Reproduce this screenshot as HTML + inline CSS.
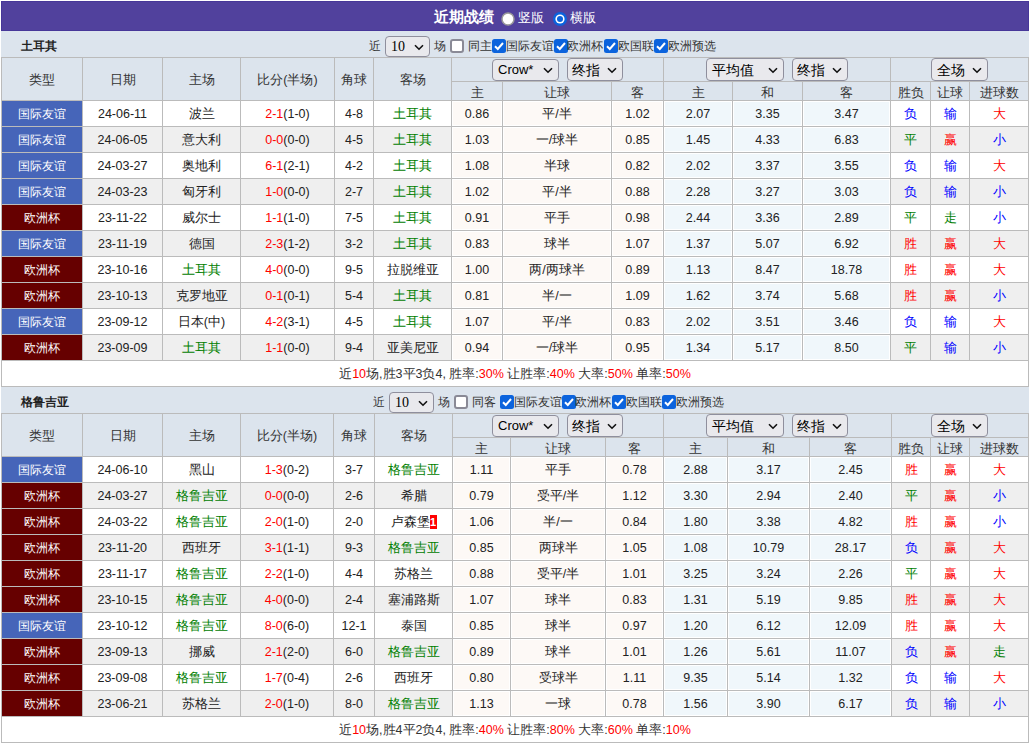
<!DOCTYPE html>
<html><head><meta charset="utf-8"><title>近期战绩</title>
<style>
html,body{margin:0;padding:0;background:#fff;width:1031px;height:744px;overflow:hidden;position:relative;font-family:"Liberation Sans",sans-serif;}
.a{position:absolute;}
.c{position:absolute;text-align:center;white-space:nowrap;overflow:hidden;}
.t{position:absolute;white-space:nowrap;}
.sel{position:absolute;border:1px solid #8f8f9d;border-radius:4px;background:#e9e9ed;}
.badge{display:inline-block;background:#f00;color:#fff;font-size:11px;font-weight:bold;width:7px;height:14px;line-height:14px;text-align:center;vertical-align:0px;}
</style></head><body>
<div class="a" style="left:1px;top:1px;width:1028px;height:30px;background:#51419d;box-sizing:border-box;border:1px solid #473799;"></div>
<div class="t" style="left:434px;top:2px;width:80px;height:30px;line-height:30px;font-size:15px;font-weight:bold;color:#fff;text-align:left;">近期战绩</div>
<svg class="a" style="left:501px;top:12px" width="14" height="14" viewBox="0 0 14 14"><circle cx="7" cy="7" r="6" fill="#fff" stroke="#9a9a9a" stroke-width="1.5"/></svg>
<div class="t" style="left:518px;top:3px;width:40px;height:30px;line-height:30px;font-size:13px;color:#fff;text-align:left;">竖版</div>
<svg class="a" style="left:553px;top:12px" width="14" height="14" viewBox="0 0 14 14"><circle cx="7" cy="7" r="7" fill="#0b63dd"/><circle cx="7" cy="7" r="4.6" fill="#fff"/><circle cx="7" cy="7" r="3" fill="#0b63dd"/></svg>
<div class="t" style="left:570px;top:3px;width:40px;height:30px;line-height:30px;font-size:13px;color:#fff;text-align:left;">横版</div>
<div class="a" style="left:1px;top:31px;width:1028px;height:26px;background:#dce4ed;"></div>
<div class="t" style="left:21px;top:33px;width:80px;height:26px;line-height:26px;font-weight:bold;font-size:11.5px;color:#222;text-align:left;">土耳其</div>
<div class="t" style="left:369px;top:33px;width:14px;height:26px;line-height:26px;font-size:12px;color:#333;text-align:left;">近</div>
<div class="sel" style="left:385px;top:36px;width:43px;height:19px;"></div>
<div class="t" style="left:391px;top:36px;height:21px;line-height:21px;font-size:14px;color:#000;font-family:'Liberation Serif',serif;">10</div>
<svg class="a" style="left:414px;top:44px" width="10" height="7" viewBox="0 0 10 7"><path d="M1 1.2 L5 5.2 L9 1.2" fill="none" stroke="#111" stroke-width="1.6"/></svg>
<div class="t" style="left:434px;top:33px;width:14px;height:26px;line-height:26px;font-size:12px;color:#333;text-align:left;">场</div>
<svg class="a" style="left:450px;top:39px" width="14" height="14" viewBox="0 0 14 14"><rect x="1" y="1" width="12" height="12" rx="2" fill="#fff" stroke="#8a8a96" stroke-width="2"/></svg>
<div class="t" style="left:468px;top:33px;width:30px;height:26px;line-height:26px;font-size:12px;color:#333;text-align:left;">同主</div>
<svg class="a" style="left:492px;top:39px" width="14" height="14" viewBox="0 0 14 14"><rect x="0" y="0" width="14" height="14" rx="2.5" fill="#0b63dd"/><path d="M3 7.2 L5.8 10 L11 4" fill="none" stroke="#fff" stroke-width="2"/></svg>
<div class="t" style="left:506px;top:33px;width:60px;height:26px;line-height:26px;font-size:12px;color:#333;text-align:left;">国际友谊</div>
<svg class="a" style="left:554px;top:39px" width="14" height="14" viewBox="0 0 14 14"><rect x="0" y="0" width="14" height="14" rx="2.5" fill="#0b63dd"/><path d="M3 7.2 L5.8 10 L11 4" fill="none" stroke="#fff" stroke-width="2"/></svg>
<div class="t" style="left:567px;top:33px;width:60px;height:26px;line-height:26px;font-size:12px;color:#333;text-align:left;">欧洲杯</div>
<svg class="a" style="left:604px;top:39px" width="14" height="14" viewBox="0 0 14 14"><rect x="0" y="0" width="14" height="14" rx="2.5" fill="#0b63dd"/><path d="M3 7.2 L5.8 10 L11 4" fill="none" stroke="#fff" stroke-width="2"/></svg>
<div class="t" style="left:618px;top:33px;width:60px;height:26px;line-height:26px;font-size:12px;color:#333;text-align:left;">欧国联</div>
<svg class="a" style="left:654px;top:39px" width="14" height="14" viewBox="0 0 14 14"><rect x="0" y="0" width="14" height="14" rx="2.5" fill="#0b63dd"/><path d="M3 7.2 L5.8 10 L11 4" fill="none" stroke="#fff" stroke-width="2"/></svg>
<div class="t" style="left:668px;top:33px;width:60px;height:26px;line-height:26px;font-size:12px;color:#333;text-align:left;">欧洲预选</div>
<div class="a" style="left:1px;top:57px;width:1028px;height:44px;background:#dce4ed;"></div>
<div class="c" style="left:2px;top:59px;width:80px;height:42px;line-height:42px;font-size:12.5px;color:#333;">类型</div>
<div class="c" style="left:83px;top:59px;width:79px;height:42px;line-height:42px;font-size:12.5px;color:#333;">日期</div>
<div class="c" style="left:163px;top:59px;width:77px;height:42px;line-height:42px;font-size:12.5px;color:#333;">主场</div>
<div class="c" style="left:241px;top:59px;width:93px;height:42px;line-height:42px;font-size:12.5px;color:#333;">比分(半场)</div>
<div class="c" style="left:335px;top:59px;width:38px;height:42px;line-height:42px;font-size:12.5px;color:#333;">角球</div>
<div class="c" style="left:374px;top:59px;width:77px;height:42px;line-height:42px;font-size:12.5px;color:#333;">客场</div>
<div class="c" style="left:452px;top:84px;width:50px;height:18px;line-height:18px;font-size:12.5px;color:#333;">主</div>
<div class="c" style="left:503px;top:84px;width:108px;height:18px;line-height:18px;font-size:12.5px;color:#333;">让球</div>
<div class="c" style="left:612px;top:84px;width:51px;height:18px;line-height:18px;font-size:12.5px;color:#333;">客</div>
<div class="c" style="left:664px;top:84px;width:68px;height:18px;line-height:18px;font-size:12.5px;color:#333;">主</div>
<div class="c" style="left:733px;top:84px;width:69px;height:18px;line-height:18px;font-size:12.5px;color:#333;">和</div>
<div class="c" style="left:803px;top:84px;width:87px;height:18px;line-height:18px;font-size:12.5px;color:#333;">客</div>
<div class="c" style="left:891px;top:84px;width:39px;height:18px;line-height:18px;font-size:12.5px;color:#333;">胜负</div>
<div class="c" style="left:931px;top:84px;width:38px;height:18px;line-height:18px;font-size:12.5px;color:#333;">让球</div>
<div class="c" style="left:970px;top:84px;width:58px;height:18px;line-height:18px;font-size:12.5px;color:#333;">进球数</div>
<div class="sel" style="left:492px;top:59px;width:65px;height:20px;"></div>
<div class="t" style="left:498px;top:59px;height:22px;line-height:22px;font-size:13px;color:#000;">Crow*</div>
<svg class="a" style="left:543px;top:67px" width="10" height="7" viewBox="0 0 10 7"><path d="M1 1.2 L5 5.2 L9 1.2" fill="none" stroke="#111" stroke-width="1.6"/></svg>
<div class="sel" style="left:567px;top:58px;width:54px;height:21px;"></div>
<div class="t" style="left:572px;top:59px;height:23px;line-height:23px;font-size:14px;color:#000;">终指</div>
<svg class="a" style="left:607px;top:67px" width="10" height="7" viewBox="0 0 10 7"><path d="M1 1.2 L5 5.2 L9 1.2" fill="none" stroke="#111" stroke-width="1.6"/></svg>
<div class="sel" style="left:706px;top:58px;width:76px;height:21px;"></div>
<div class="t" style="left:712px;top:59px;height:23px;line-height:23px;font-size:14px;color:#000;">平均值</div>
<svg class="a" style="left:768px;top:67px" width="10" height="7" viewBox="0 0 10 7"><path d="M1 1.2 L5 5.2 L9 1.2" fill="none" stroke="#111" stroke-width="1.6"/></svg>
<div class="sel" style="left:792px;top:58px;width:54px;height:21px;"></div>
<div class="t" style="left:797px;top:59px;height:23px;line-height:23px;font-size:14px;color:#000;">终指</div>
<svg class="a" style="left:832px;top:67px" width="10" height="7" viewBox="0 0 10 7"><path d="M1 1.2 L5 5.2 L9 1.2" fill="none" stroke="#111" stroke-width="1.6"/></svg>
<div class="sel" style="left:931px;top:58px;width:55px;height:21px;"></div>
<div class="t" style="left:937px;top:59px;height:23px;line-height:23px;font-size:14px;color:#000;">全场</div>
<svg class="a" style="left:972px;top:67px" width="10" height="7" viewBox="0 0 10 7"><path d="M1 1.2 L5 5.2 L9 1.2" fill="none" stroke="#111" stroke-width="1.6"/></svg>
<div class="a" style="left:1px;top:101px;width:1028px;height:25px;background:#ffffff;"></div>
<div class="a" style="left:2px;top:101px;width:80px;height:25px;background:#4665b9;"></div>
<div class="a" style="left:452px;top:101px;width:50px;height:25px;background:#fdf9f6;box-shadow:inset 0 0 0 1px #fff;"></div>
<div class="a" style="left:503px;top:101px;width:108px;height:25px;background:#fdf9f6;box-shadow:inset 0 0 0 1px #fff;"></div>
<div class="a" style="left:612px;top:101px;width:51px;height:25px;background:#fdf9f6;box-shadow:inset 0 0 0 1px #fff;"></div>
<div class="a" style="left:664px;top:101px;width:68px;height:25px;background:#f0f7fb;box-shadow:inset 0 0 0 1px #fff;"></div>
<div class="a" style="left:733px;top:101px;width:69px;height:25px;background:#f0f7fb;box-shadow:inset 0 0 0 1px #fff;"></div>
<div class="a" style="left:803px;top:101px;width:87px;height:25px;background:#f0f7fb;box-shadow:inset 0 0 0 1px #fff;"></div>
<div class="c" style="left:2px;top:102px;width:80px;height:25px;line-height:25px;font-size:12px;color:#fff;">国际友谊</div>
<div class="c" style="left:83px;top:102px;width:79px;height:25px;line-height:25px;font-size:12.5px;color:#222222;">24-06-11</div>
<div class="c" style="left:163px;top:102px;width:77px;height:25px;line-height:25px;font-size:12.5px;color:#222222;">波兰</div>
<div class="c" style="left:241px;top:102px;width:93px;height:25px;line-height:25px;font-size:12.5px;color:#222222;"><span style="color:#f00">2-1</span>(1-0)</div>
<div class="c" style="left:335px;top:102px;width:38px;height:25px;line-height:25px;font-size:12.5px;color:#222222;">4-8</div>
<div class="c" style="left:374px;top:102px;width:77px;height:25px;line-height:25px;font-size:12.5px;color:#008000;">土耳其</div>
<div class="c" style="left:452px;top:102px;width:50px;height:25px;line-height:25px;font-size:12.5px;color:#222222;">0.86</div>
<div class="c" style="left:503px;top:102px;width:108px;height:25px;line-height:25px;font-size:12.5px;color:#222222;">平/半</div>
<div class="c" style="left:612px;top:102px;width:51px;height:25px;line-height:25px;font-size:12.5px;color:#222222;">1.02</div>
<div class="c" style="left:664px;top:102px;width:68px;height:25px;line-height:25px;font-size:12.5px;color:#222222;">2.07</div>
<div class="c" style="left:733px;top:102px;width:69px;height:25px;line-height:25px;font-size:12.5px;color:#222222;">3.35</div>
<div class="c" style="left:803px;top:102px;width:87px;height:25px;line-height:25px;font-size:12.5px;color:#222222;">3.47</div>
<div class="c" style="left:891px;top:102px;width:39px;height:25px;line-height:25px;font-size:12.5px;color:#0000ff;">负</div>
<div class="c" style="left:931px;top:102px;width:38px;height:25px;line-height:25px;font-size:12.5px;color:#0000ff;">输</div>
<div class="c" style="left:970px;top:102px;width:58px;height:25px;line-height:25px;font-size:12.5px;color:#ff0000;">大</div>
<div class="a" style="left:1px;top:127px;width:1028px;height:25px;background:#efefef;"></div>
<div class="a" style="left:2px;top:127px;width:80px;height:25px;background:#4665b9;"></div>
<div class="a" style="left:452px;top:127px;width:50px;height:25px;background:#fdf9f6;box-shadow:inset 0 0 0 1px #fff;"></div>
<div class="a" style="left:503px;top:127px;width:108px;height:25px;background:#fdf9f6;box-shadow:inset 0 0 0 1px #fff;"></div>
<div class="a" style="left:612px;top:127px;width:51px;height:25px;background:#fdf9f6;box-shadow:inset 0 0 0 1px #fff;"></div>
<div class="a" style="left:664px;top:127px;width:68px;height:25px;background:#f0f7fb;box-shadow:inset 0 0 0 1px #fff;"></div>
<div class="a" style="left:733px;top:127px;width:69px;height:25px;background:#f0f7fb;box-shadow:inset 0 0 0 1px #fff;"></div>
<div class="a" style="left:803px;top:127px;width:87px;height:25px;background:#f0f7fb;box-shadow:inset 0 0 0 1px #fff;"></div>
<div class="c" style="left:2px;top:128px;width:80px;height:25px;line-height:25px;font-size:12px;color:#fff;">国际友谊</div>
<div class="c" style="left:83px;top:128px;width:79px;height:25px;line-height:25px;font-size:12.5px;color:#222222;">24-06-05</div>
<div class="c" style="left:163px;top:128px;width:77px;height:25px;line-height:25px;font-size:12.5px;color:#222222;">意大利</div>
<div class="c" style="left:241px;top:128px;width:93px;height:25px;line-height:25px;font-size:12.5px;color:#222222;"><span style="color:#f00">0-0</span>(0-0)</div>
<div class="c" style="left:335px;top:128px;width:38px;height:25px;line-height:25px;font-size:12.5px;color:#222222;">4-5</div>
<div class="c" style="left:374px;top:128px;width:77px;height:25px;line-height:25px;font-size:12.5px;color:#008000;">土耳其</div>
<div class="c" style="left:452px;top:128px;width:50px;height:25px;line-height:25px;font-size:12.5px;color:#222222;">1.03</div>
<div class="c" style="left:503px;top:128px;width:108px;height:25px;line-height:25px;font-size:12.5px;color:#222222;">一/球半</div>
<div class="c" style="left:612px;top:128px;width:51px;height:25px;line-height:25px;font-size:12.5px;color:#222222;">0.85</div>
<div class="c" style="left:664px;top:128px;width:68px;height:25px;line-height:25px;font-size:12.5px;color:#222222;">1.45</div>
<div class="c" style="left:733px;top:128px;width:69px;height:25px;line-height:25px;font-size:12.5px;color:#222222;">4.33</div>
<div class="c" style="left:803px;top:128px;width:87px;height:25px;line-height:25px;font-size:12.5px;color:#222222;">6.83</div>
<div class="c" style="left:891px;top:128px;width:39px;height:25px;line-height:25px;font-size:12.5px;color:#008000;">平</div>
<div class="c" style="left:931px;top:128px;width:38px;height:25px;line-height:25px;font-size:12.5px;color:#ff0000;">赢</div>
<div class="c" style="left:970px;top:128px;width:58px;height:25px;line-height:25px;font-size:12.5px;color:#0000ff;">小</div>
<div class="a" style="left:1px;top:153px;width:1028px;height:25px;background:#ffffff;"></div>
<div class="a" style="left:2px;top:153px;width:80px;height:25px;background:#4665b9;"></div>
<div class="a" style="left:452px;top:153px;width:50px;height:25px;background:#fdf9f6;box-shadow:inset 0 0 0 1px #fff;"></div>
<div class="a" style="left:503px;top:153px;width:108px;height:25px;background:#fdf9f6;box-shadow:inset 0 0 0 1px #fff;"></div>
<div class="a" style="left:612px;top:153px;width:51px;height:25px;background:#fdf9f6;box-shadow:inset 0 0 0 1px #fff;"></div>
<div class="a" style="left:664px;top:153px;width:68px;height:25px;background:#f0f7fb;box-shadow:inset 0 0 0 1px #fff;"></div>
<div class="a" style="left:733px;top:153px;width:69px;height:25px;background:#f0f7fb;box-shadow:inset 0 0 0 1px #fff;"></div>
<div class="a" style="left:803px;top:153px;width:87px;height:25px;background:#f0f7fb;box-shadow:inset 0 0 0 1px #fff;"></div>
<div class="c" style="left:2px;top:154px;width:80px;height:25px;line-height:25px;font-size:12px;color:#fff;">国际友谊</div>
<div class="c" style="left:83px;top:154px;width:79px;height:25px;line-height:25px;font-size:12.5px;color:#222222;">24-03-27</div>
<div class="c" style="left:163px;top:154px;width:77px;height:25px;line-height:25px;font-size:12.5px;color:#222222;">奥地利</div>
<div class="c" style="left:241px;top:154px;width:93px;height:25px;line-height:25px;font-size:12.5px;color:#222222;"><span style="color:#f00">6-1</span>(2-1)</div>
<div class="c" style="left:335px;top:154px;width:38px;height:25px;line-height:25px;font-size:12.5px;color:#222222;">4-2</div>
<div class="c" style="left:374px;top:154px;width:77px;height:25px;line-height:25px;font-size:12.5px;color:#008000;">土耳其</div>
<div class="c" style="left:452px;top:154px;width:50px;height:25px;line-height:25px;font-size:12.5px;color:#222222;">1.08</div>
<div class="c" style="left:503px;top:154px;width:108px;height:25px;line-height:25px;font-size:12.5px;color:#222222;">半球</div>
<div class="c" style="left:612px;top:154px;width:51px;height:25px;line-height:25px;font-size:12.5px;color:#222222;">0.82</div>
<div class="c" style="left:664px;top:154px;width:68px;height:25px;line-height:25px;font-size:12.5px;color:#222222;">2.02</div>
<div class="c" style="left:733px;top:154px;width:69px;height:25px;line-height:25px;font-size:12.5px;color:#222222;">3.37</div>
<div class="c" style="left:803px;top:154px;width:87px;height:25px;line-height:25px;font-size:12.5px;color:#222222;">3.55</div>
<div class="c" style="left:891px;top:154px;width:39px;height:25px;line-height:25px;font-size:12.5px;color:#0000ff;">负</div>
<div class="c" style="left:931px;top:154px;width:38px;height:25px;line-height:25px;font-size:12.5px;color:#0000ff;">输</div>
<div class="c" style="left:970px;top:154px;width:58px;height:25px;line-height:25px;font-size:12.5px;color:#ff0000;">大</div>
<div class="a" style="left:1px;top:179px;width:1028px;height:25px;background:#efefef;"></div>
<div class="a" style="left:2px;top:179px;width:80px;height:25px;background:#4665b9;"></div>
<div class="a" style="left:452px;top:179px;width:50px;height:25px;background:#fdf9f6;box-shadow:inset 0 0 0 1px #fff;"></div>
<div class="a" style="left:503px;top:179px;width:108px;height:25px;background:#fdf9f6;box-shadow:inset 0 0 0 1px #fff;"></div>
<div class="a" style="left:612px;top:179px;width:51px;height:25px;background:#fdf9f6;box-shadow:inset 0 0 0 1px #fff;"></div>
<div class="a" style="left:664px;top:179px;width:68px;height:25px;background:#f0f7fb;box-shadow:inset 0 0 0 1px #fff;"></div>
<div class="a" style="left:733px;top:179px;width:69px;height:25px;background:#f0f7fb;box-shadow:inset 0 0 0 1px #fff;"></div>
<div class="a" style="left:803px;top:179px;width:87px;height:25px;background:#f0f7fb;box-shadow:inset 0 0 0 1px #fff;"></div>
<div class="c" style="left:2px;top:180px;width:80px;height:25px;line-height:25px;font-size:12px;color:#fff;">国际友谊</div>
<div class="c" style="left:83px;top:180px;width:79px;height:25px;line-height:25px;font-size:12.5px;color:#222222;">24-03-23</div>
<div class="c" style="left:163px;top:180px;width:77px;height:25px;line-height:25px;font-size:12.5px;color:#222222;">匈牙利</div>
<div class="c" style="left:241px;top:180px;width:93px;height:25px;line-height:25px;font-size:12.5px;color:#222222;"><span style="color:#f00">1-0</span>(0-0)</div>
<div class="c" style="left:335px;top:180px;width:38px;height:25px;line-height:25px;font-size:12.5px;color:#222222;">2-7</div>
<div class="c" style="left:374px;top:180px;width:77px;height:25px;line-height:25px;font-size:12.5px;color:#008000;">土耳其</div>
<div class="c" style="left:452px;top:180px;width:50px;height:25px;line-height:25px;font-size:12.5px;color:#222222;">1.02</div>
<div class="c" style="left:503px;top:180px;width:108px;height:25px;line-height:25px;font-size:12.5px;color:#222222;">平/半</div>
<div class="c" style="left:612px;top:180px;width:51px;height:25px;line-height:25px;font-size:12.5px;color:#222222;">0.88</div>
<div class="c" style="left:664px;top:180px;width:68px;height:25px;line-height:25px;font-size:12.5px;color:#222222;">2.28</div>
<div class="c" style="left:733px;top:180px;width:69px;height:25px;line-height:25px;font-size:12.5px;color:#222222;">3.27</div>
<div class="c" style="left:803px;top:180px;width:87px;height:25px;line-height:25px;font-size:12.5px;color:#222222;">3.03</div>
<div class="c" style="left:891px;top:180px;width:39px;height:25px;line-height:25px;font-size:12.5px;color:#0000ff;">负</div>
<div class="c" style="left:931px;top:180px;width:38px;height:25px;line-height:25px;font-size:12.5px;color:#0000ff;">输</div>
<div class="c" style="left:970px;top:180px;width:58px;height:25px;line-height:25px;font-size:12.5px;color:#0000ff;">小</div>
<div class="a" style="left:1px;top:205px;width:1028px;height:25px;background:#ffffff;"></div>
<div class="a" style="left:2px;top:205px;width:80px;height:25px;background:#660000;"></div>
<div class="a" style="left:452px;top:205px;width:50px;height:25px;background:#fdf9f6;box-shadow:inset 0 0 0 1px #fff;"></div>
<div class="a" style="left:503px;top:205px;width:108px;height:25px;background:#fdf9f6;box-shadow:inset 0 0 0 1px #fff;"></div>
<div class="a" style="left:612px;top:205px;width:51px;height:25px;background:#fdf9f6;box-shadow:inset 0 0 0 1px #fff;"></div>
<div class="a" style="left:664px;top:205px;width:68px;height:25px;background:#f0f7fb;box-shadow:inset 0 0 0 1px #fff;"></div>
<div class="a" style="left:733px;top:205px;width:69px;height:25px;background:#f0f7fb;box-shadow:inset 0 0 0 1px #fff;"></div>
<div class="a" style="left:803px;top:205px;width:87px;height:25px;background:#f0f7fb;box-shadow:inset 0 0 0 1px #fff;"></div>
<div class="c" style="left:2px;top:206px;width:80px;height:25px;line-height:25px;font-size:12px;color:#fff;">欧洲杯</div>
<div class="c" style="left:83px;top:206px;width:79px;height:25px;line-height:25px;font-size:12.5px;color:#222222;">23-11-22</div>
<div class="c" style="left:163px;top:206px;width:77px;height:25px;line-height:25px;font-size:12.5px;color:#222222;">威尔士</div>
<div class="c" style="left:241px;top:206px;width:93px;height:25px;line-height:25px;font-size:12.5px;color:#222222;"><span style="color:#f00">1-1</span>(1-0)</div>
<div class="c" style="left:335px;top:206px;width:38px;height:25px;line-height:25px;font-size:12.5px;color:#222222;">7-5</div>
<div class="c" style="left:374px;top:206px;width:77px;height:25px;line-height:25px;font-size:12.5px;color:#008000;">土耳其</div>
<div class="c" style="left:452px;top:206px;width:50px;height:25px;line-height:25px;font-size:12.5px;color:#222222;">0.91</div>
<div class="c" style="left:503px;top:206px;width:108px;height:25px;line-height:25px;font-size:12.5px;color:#222222;">平手</div>
<div class="c" style="left:612px;top:206px;width:51px;height:25px;line-height:25px;font-size:12.5px;color:#222222;">0.98</div>
<div class="c" style="left:664px;top:206px;width:68px;height:25px;line-height:25px;font-size:12.5px;color:#222222;">2.44</div>
<div class="c" style="left:733px;top:206px;width:69px;height:25px;line-height:25px;font-size:12.5px;color:#222222;">3.36</div>
<div class="c" style="left:803px;top:206px;width:87px;height:25px;line-height:25px;font-size:12.5px;color:#222222;">2.89</div>
<div class="c" style="left:891px;top:206px;width:39px;height:25px;line-height:25px;font-size:12.5px;color:#008000;">平</div>
<div class="c" style="left:931px;top:206px;width:38px;height:25px;line-height:25px;font-size:12.5px;color:#008000;">走</div>
<div class="c" style="left:970px;top:206px;width:58px;height:25px;line-height:25px;font-size:12.5px;color:#0000ff;">小</div>
<div class="a" style="left:1px;top:231px;width:1028px;height:25px;background:#efefef;"></div>
<div class="a" style="left:2px;top:231px;width:80px;height:25px;background:#4665b9;"></div>
<div class="a" style="left:452px;top:231px;width:50px;height:25px;background:#fdf9f6;box-shadow:inset 0 0 0 1px #fff;"></div>
<div class="a" style="left:503px;top:231px;width:108px;height:25px;background:#fdf9f6;box-shadow:inset 0 0 0 1px #fff;"></div>
<div class="a" style="left:612px;top:231px;width:51px;height:25px;background:#fdf9f6;box-shadow:inset 0 0 0 1px #fff;"></div>
<div class="a" style="left:664px;top:231px;width:68px;height:25px;background:#f0f7fb;box-shadow:inset 0 0 0 1px #fff;"></div>
<div class="a" style="left:733px;top:231px;width:69px;height:25px;background:#f0f7fb;box-shadow:inset 0 0 0 1px #fff;"></div>
<div class="a" style="left:803px;top:231px;width:87px;height:25px;background:#f0f7fb;box-shadow:inset 0 0 0 1px #fff;"></div>
<div class="c" style="left:2px;top:232px;width:80px;height:25px;line-height:25px;font-size:12px;color:#fff;">国际友谊</div>
<div class="c" style="left:83px;top:232px;width:79px;height:25px;line-height:25px;font-size:12.5px;color:#222222;">23-11-19</div>
<div class="c" style="left:163px;top:232px;width:77px;height:25px;line-height:25px;font-size:12.5px;color:#222222;">德国</div>
<div class="c" style="left:241px;top:232px;width:93px;height:25px;line-height:25px;font-size:12.5px;color:#222222;"><span style="color:#f00">2-3</span>(1-2)</div>
<div class="c" style="left:335px;top:232px;width:38px;height:25px;line-height:25px;font-size:12.5px;color:#222222;">3-2</div>
<div class="c" style="left:374px;top:232px;width:77px;height:25px;line-height:25px;font-size:12.5px;color:#008000;">土耳其</div>
<div class="c" style="left:452px;top:232px;width:50px;height:25px;line-height:25px;font-size:12.5px;color:#222222;">0.83</div>
<div class="c" style="left:503px;top:232px;width:108px;height:25px;line-height:25px;font-size:12.5px;color:#222222;">球半</div>
<div class="c" style="left:612px;top:232px;width:51px;height:25px;line-height:25px;font-size:12.5px;color:#222222;">1.07</div>
<div class="c" style="left:664px;top:232px;width:68px;height:25px;line-height:25px;font-size:12.5px;color:#222222;">1.37</div>
<div class="c" style="left:733px;top:232px;width:69px;height:25px;line-height:25px;font-size:12.5px;color:#222222;">5.07</div>
<div class="c" style="left:803px;top:232px;width:87px;height:25px;line-height:25px;font-size:12.5px;color:#222222;">6.92</div>
<div class="c" style="left:891px;top:232px;width:39px;height:25px;line-height:25px;font-size:12.5px;color:#ff0000;">胜</div>
<div class="c" style="left:931px;top:232px;width:38px;height:25px;line-height:25px;font-size:12.5px;color:#ff0000;">赢</div>
<div class="c" style="left:970px;top:232px;width:58px;height:25px;line-height:25px;font-size:12.5px;color:#ff0000;">大</div>
<div class="a" style="left:1px;top:257px;width:1028px;height:25px;background:#ffffff;"></div>
<div class="a" style="left:2px;top:257px;width:80px;height:25px;background:#660000;"></div>
<div class="a" style="left:452px;top:257px;width:50px;height:25px;background:#fdf9f6;box-shadow:inset 0 0 0 1px #fff;"></div>
<div class="a" style="left:503px;top:257px;width:108px;height:25px;background:#fdf9f6;box-shadow:inset 0 0 0 1px #fff;"></div>
<div class="a" style="left:612px;top:257px;width:51px;height:25px;background:#fdf9f6;box-shadow:inset 0 0 0 1px #fff;"></div>
<div class="a" style="left:664px;top:257px;width:68px;height:25px;background:#f0f7fb;box-shadow:inset 0 0 0 1px #fff;"></div>
<div class="a" style="left:733px;top:257px;width:69px;height:25px;background:#f0f7fb;box-shadow:inset 0 0 0 1px #fff;"></div>
<div class="a" style="left:803px;top:257px;width:87px;height:25px;background:#f0f7fb;box-shadow:inset 0 0 0 1px #fff;"></div>
<div class="c" style="left:2px;top:258px;width:80px;height:25px;line-height:25px;font-size:12px;color:#fff;">欧洲杯</div>
<div class="c" style="left:83px;top:258px;width:79px;height:25px;line-height:25px;font-size:12.5px;color:#222222;">23-10-16</div>
<div class="c" style="left:163px;top:258px;width:77px;height:25px;line-height:25px;font-size:12.5px;color:#008000;">土耳其</div>
<div class="c" style="left:241px;top:258px;width:93px;height:25px;line-height:25px;font-size:12.5px;color:#222222;"><span style="color:#f00">4-0</span>(0-0)</div>
<div class="c" style="left:335px;top:258px;width:38px;height:25px;line-height:25px;font-size:12.5px;color:#222222;">9-5</div>
<div class="c" style="left:374px;top:258px;width:77px;height:25px;line-height:25px;font-size:12.5px;color:#222222;">拉脱维亚</div>
<div class="c" style="left:452px;top:258px;width:50px;height:25px;line-height:25px;font-size:12.5px;color:#222222;">1.00</div>
<div class="c" style="left:503px;top:258px;width:108px;height:25px;line-height:25px;font-size:12.5px;color:#222222;">两/两球半</div>
<div class="c" style="left:612px;top:258px;width:51px;height:25px;line-height:25px;font-size:12.5px;color:#222222;">0.89</div>
<div class="c" style="left:664px;top:258px;width:68px;height:25px;line-height:25px;font-size:12.5px;color:#222222;">1.13</div>
<div class="c" style="left:733px;top:258px;width:69px;height:25px;line-height:25px;font-size:12.5px;color:#222222;">8.47</div>
<div class="c" style="left:803px;top:258px;width:87px;height:25px;line-height:25px;font-size:12.5px;color:#222222;">18.78</div>
<div class="c" style="left:891px;top:258px;width:39px;height:25px;line-height:25px;font-size:12.5px;color:#ff0000;">胜</div>
<div class="c" style="left:931px;top:258px;width:38px;height:25px;line-height:25px;font-size:12.5px;color:#ff0000;">赢</div>
<div class="c" style="left:970px;top:258px;width:58px;height:25px;line-height:25px;font-size:12.5px;color:#ff0000;">大</div>
<div class="a" style="left:1px;top:283px;width:1028px;height:25px;background:#efefef;"></div>
<div class="a" style="left:2px;top:283px;width:80px;height:25px;background:#660000;"></div>
<div class="a" style="left:452px;top:283px;width:50px;height:25px;background:#fdf9f6;box-shadow:inset 0 0 0 1px #fff;"></div>
<div class="a" style="left:503px;top:283px;width:108px;height:25px;background:#fdf9f6;box-shadow:inset 0 0 0 1px #fff;"></div>
<div class="a" style="left:612px;top:283px;width:51px;height:25px;background:#fdf9f6;box-shadow:inset 0 0 0 1px #fff;"></div>
<div class="a" style="left:664px;top:283px;width:68px;height:25px;background:#f0f7fb;box-shadow:inset 0 0 0 1px #fff;"></div>
<div class="a" style="left:733px;top:283px;width:69px;height:25px;background:#f0f7fb;box-shadow:inset 0 0 0 1px #fff;"></div>
<div class="a" style="left:803px;top:283px;width:87px;height:25px;background:#f0f7fb;box-shadow:inset 0 0 0 1px #fff;"></div>
<div class="c" style="left:2px;top:284px;width:80px;height:25px;line-height:25px;font-size:12px;color:#fff;">欧洲杯</div>
<div class="c" style="left:83px;top:284px;width:79px;height:25px;line-height:25px;font-size:12.5px;color:#222222;">23-10-13</div>
<div class="c" style="left:163px;top:284px;width:77px;height:25px;line-height:25px;font-size:12.5px;color:#222222;">克罗地亚</div>
<div class="c" style="left:241px;top:284px;width:93px;height:25px;line-height:25px;font-size:12.5px;color:#222222;"><span style="color:#f00">0-1</span>(0-1)</div>
<div class="c" style="left:335px;top:284px;width:38px;height:25px;line-height:25px;font-size:12.5px;color:#222222;">5-4</div>
<div class="c" style="left:374px;top:284px;width:77px;height:25px;line-height:25px;font-size:12.5px;color:#008000;">土耳其</div>
<div class="c" style="left:452px;top:284px;width:50px;height:25px;line-height:25px;font-size:12.5px;color:#222222;">0.81</div>
<div class="c" style="left:503px;top:284px;width:108px;height:25px;line-height:25px;font-size:12.5px;color:#222222;">半/一</div>
<div class="c" style="left:612px;top:284px;width:51px;height:25px;line-height:25px;font-size:12.5px;color:#222222;">1.09</div>
<div class="c" style="left:664px;top:284px;width:68px;height:25px;line-height:25px;font-size:12.5px;color:#222222;">1.62</div>
<div class="c" style="left:733px;top:284px;width:69px;height:25px;line-height:25px;font-size:12.5px;color:#222222;">3.74</div>
<div class="c" style="left:803px;top:284px;width:87px;height:25px;line-height:25px;font-size:12.5px;color:#222222;">5.68</div>
<div class="c" style="left:891px;top:284px;width:39px;height:25px;line-height:25px;font-size:12.5px;color:#ff0000;">胜</div>
<div class="c" style="left:931px;top:284px;width:38px;height:25px;line-height:25px;font-size:12.5px;color:#ff0000;">赢</div>
<div class="c" style="left:970px;top:284px;width:58px;height:25px;line-height:25px;font-size:12.5px;color:#0000ff;">小</div>
<div class="a" style="left:1px;top:309px;width:1028px;height:25px;background:#ffffff;"></div>
<div class="a" style="left:2px;top:309px;width:80px;height:25px;background:#4665b9;"></div>
<div class="a" style="left:452px;top:309px;width:50px;height:25px;background:#fdf9f6;box-shadow:inset 0 0 0 1px #fff;"></div>
<div class="a" style="left:503px;top:309px;width:108px;height:25px;background:#fdf9f6;box-shadow:inset 0 0 0 1px #fff;"></div>
<div class="a" style="left:612px;top:309px;width:51px;height:25px;background:#fdf9f6;box-shadow:inset 0 0 0 1px #fff;"></div>
<div class="a" style="left:664px;top:309px;width:68px;height:25px;background:#f0f7fb;box-shadow:inset 0 0 0 1px #fff;"></div>
<div class="a" style="left:733px;top:309px;width:69px;height:25px;background:#f0f7fb;box-shadow:inset 0 0 0 1px #fff;"></div>
<div class="a" style="left:803px;top:309px;width:87px;height:25px;background:#f0f7fb;box-shadow:inset 0 0 0 1px #fff;"></div>
<div class="c" style="left:2px;top:310px;width:80px;height:25px;line-height:25px;font-size:12px;color:#fff;">国际友谊</div>
<div class="c" style="left:83px;top:310px;width:79px;height:25px;line-height:25px;font-size:12.5px;color:#222222;">23-09-12</div>
<div class="c" style="left:163px;top:310px;width:77px;height:25px;line-height:25px;font-size:12.5px;color:#222222;">日本(中)</div>
<div class="c" style="left:241px;top:310px;width:93px;height:25px;line-height:25px;font-size:12.5px;color:#222222;"><span style="color:#f00">4-2</span>(3-1)</div>
<div class="c" style="left:335px;top:310px;width:38px;height:25px;line-height:25px;font-size:12.5px;color:#222222;">4-5</div>
<div class="c" style="left:374px;top:310px;width:77px;height:25px;line-height:25px;font-size:12.5px;color:#008000;">土耳其</div>
<div class="c" style="left:452px;top:310px;width:50px;height:25px;line-height:25px;font-size:12.5px;color:#222222;">1.07</div>
<div class="c" style="left:503px;top:310px;width:108px;height:25px;line-height:25px;font-size:12.5px;color:#222222;">平/半</div>
<div class="c" style="left:612px;top:310px;width:51px;height:25px;line-height:25px;font-size:12.5px;color:#222222;">0.83</div>
<div class="c" style="left:664px;top:310px;width:68px;height:25px;line-height:25px;font-size:12.5px;color:#222222;">2.02</div>
<div class="c" style="left:733px;top:310px;width:69px;height:25px;line-height:25px;font-size:12.5px;color:#222222;">3.51</div>
<div class="c" style="left:803px;top:310px;width:87px;height:25px;line-height:25px;font-size:12.5px;color:#222222;">3.46</div>
<div class="c" style="left:891px;top:310px;width:39px;height:25px;line-height:25px;font-size:12.5px;color:#0000ff;">负</div>
<div class="c" style="left:931px;top:310px;width:38px;height:25px;line-height:25px;font-size:12.5px;color:#0000ff;">输</div>
<div class="c" style="left:970px;top:310px;width:58px;height:25px;line-height:25px;font-size:12.5px;color:#ff0000;">大</div>
<div class="a" style="left:1px;top:335px;width:1028px;height:25px;background:#efefef;"></div>
<div class="a" style="left:2px;top:335px;width:80px;height:25px;background:#660000;"></div>
<div class="a" style="left:452px;top:335px;width:50px;height:25px;background:#fdf9f6;box-shadow:inset 0 0 0 1px #fff;"></div>
<div class="a" style="left:503px;top:335px;width:108px;height:25px;background:#fdf9f6;box-shadow:inset 0 0 0 1px #fff;"></div>
<div class="a" style="left:612px;top:335px;width:51px;height:25px;background:#fdf9f6;box-shadow:inset 0 0 0 1px #fff;"></div>
<div class="a" style="left:664px;top:335px;width:68px;height:25px;background:#f0f7fb;box-shadow:inset 0 0 0 1px #fff;"></div>
<div class="a" style="left:733px;top:335px;width:69px;height:25px;background:#f0f7fb;box-shadow:inset 0 0 0 1px #fff;"></div>
<div class="a" style="left:803px;top:335px;width:87px;height:25px;background:#f0f7fb;box-shadow:inset 0 0 0 1px #fff;"></div>
<div class="c" style="left:2px;top:336px;width:80px;height:25px;line-height:25px;font-size:12px;color:#fff;">欧洲杯</div>
<div class="c" style="left:83px;top:336px;width:79px;height:25px;line-height:25px;font-size:12.5px;color:#222222;">23-09-09</div>
<div class="c" style="left:163px;top:336px;width:77px;height:25px;line-height:25px;font-size:12.5px;color:#008000;">土耳其</div>
<div class="c" style="left:241px;top:336px;width:93px;height:25px;line-height:25px;font-size:12.5px;color:#222222;"><span style="color:#f00">1-1</span>(0-0)</div>
<div class="c" style="left:335px;top:336px;width:38px;height:25px;line-height:25px;font-size:12.5px;color:#222222;">9-4</div>
<div class="c" style="left:374px;top:336px;width:77px;height:25px;line-height:25px;font-size:12.5px;color:#222222;">亚美尼亚</div>
<div class="c" style="left:452px;top:336px;width:50px;height:25px;line-height:25px;font-size:12.5px;color:#222222;">0.94</div>
<div class="c" style="left:503px;top:336px;width:108px;height:25px;line-height:25px;font-size:12.5px;color:#222222;">一/球半</div>
<div class="c" style="left:612px;top:336px;width:51px;height:25px;line-height:25px;font-size:12.5px;color:#222222;">0.95</div>
<div class="c" style="left:664px;top:336px;width:68px;height:25px;line-height:25px;font-size:12.5px;color:#222222;">1.34</div>
<div class="c" style="left:733px;top:336px;width:69px;height:25px;line-height:25px;font-size:12.5px;color:#222222;">5.17</div>
<div class="c" style="left:803px;top:336px;width:87px;height:25px;line-height:25px;font-size:12.5px;color:#222222;">8.50</div>
<div class="c" style="left:891px;top:336px;width:39px;height:25px;line-height:25px;font-size:12.5px;color:#008000;">平</div>
<div class="c" style="left:931px;top:336px;width:38px;height:25px;line-height:25px;font-size:12.5px;color:#0000ff;">输</div>
<div class="c" style="left:970px;top:336px;width:58px;height:25px;line-height:25px;font-size:12.5px;color:#0000ff;">小</div>
<div class="a" style="left:1px;top:361px;width:1028px;height:25px;background:#fff;"></div>
<div class="c" style="left:1px;top:362px;width:1028px;height:25px;line-height:25px;font-size:12.5px;color:#333;">近<span style="color:#f00">10</span>场,胜3平3负4, 胜率:<span style="color:#f00">30%</span> 让胜率:<span style="color:#f00">40%</span> 大率:<span style="color:#f00">50%</span> 单率:<span style="color:#f00">50%</span></div>
<div class="a" style="left:1px;top:57px;width:1028px;height:1px;background:#bbbbbb;"></div>
<div class="a" style="left:451px;top:81px;width:577px;height:1px;background:#bbbbbb;"></div>
<div class="a" style="left:1px;top:100px;width:1028px;height:1px;background:#bbbbbb;"></div>
<div class="a" style="left:1px;top:126px;width:1028px;height:1px;background:#bbbbbb;"></div>
<div class="a" style="left:1px;top:152px;width:1028px;height:1px;background:#bbbbbb;"></div>
<div class="a" style="left:1px;top:178px;width:1028px;height:1px;background:#bbbbbb;"></div>
<div class="a" style="left:1px;top:204px;width:1028px;height:1px;background:#bbbbbb;"></div>
<div class="a" style="left:1px;top:230px;width:1028px;height:1px;background:#bbbbbb;"></div>
<div class="a" style="left:1px;top:256px;width:1028px;height:1px;background:#bbbbbb;"></div>
<div class="a" style="left:1px;top:282px;width:1028px;height:1px;background:#bbbbbb;"></div>
<div class="a" style="left:1px;top:308px;width:1028px;height:1px;background:#bbbbbb;"></div>
<div class="a" style="left:1px;top:334px;width:1028px;height:1px;background:#bbbbbb;"></div>
<div class="a" style="left:1px;top:360px;width:1028px;height:1px;background:#bbbbbb;"></div>
<div class="a" style="left:1px;top:386px;width:1028px;height:1px;background:#bbbbbb;"></div>
<div class="a" style="left:1px;top:57px;width:1px;height:330px;background:#bbbbbb;"></div>
<div class="a" style="left:82px;top:57px;width:1px;height:304px;background:#bbbbbb;"></div>
<div class="a" style="left:162px;top:57px;width:1px;height:304px;background:#bbbbbb;"></div>
<div class="a" style="left:240px;top:57px;width:1px;height:304px;background:#bbbbbb;"></div>
<div class="a" style="left:334px;top:57px;width:1px;height:304px;background:#bbbbbb;"></div>
<div class="a" style="left:373px;top:57px;width:1px;height:304px;background:#bbbbbb;"></div>
<div class="a" style="left:451px;top:57px;width:1px;height:304px;background:#bbbbbb;"></div>
<div class="a" style="left:502px;top:81px;width:1px;height:280px;background:#bbbbbb;"></div>
<div class="a" style="left:611px;top:81px;width:1px;height:280px;background:#bbbbbb;"></div>
<div class="a" style="left:663px;top:57px;width:1px;height:304px;background:#bbbbbb;"></div>
<div class="a" style="left:732px;top:81px;width:1px;height:280px;background:#bbbbbb;"></div>
<div class="a" style="left:802px;top:81px;width:1px;height:280px;background:#bbbbbb;"></div>
<div class="a" style="left:890px;top:57px;width:1px;height:304px;background:#bbbbbb;"></div>
<div class="a" style="left:930px;top:81px;width:1px;height:280px;background:#bbbbbb;"></div>
<div class="a" style="left:969px;top:81px;width:1px;height:280px;background:#bbbbbb;"></div>
<div class="a" style="left:1028px;top:57px;width:1px;height:330px;background:#bbbbbb;"></div>
<div class="a" style="left:1px;top:387px;width:1028px;height:26px;background:#dce4ed;"></div>
<div class="t" style="left:21px;top:389px;width:80px;height:26px;line-height:26px;font-weight:bold;font-size:11.5px;color:#222;text-align:left;">格鲁吉亚</div>
<div class="t" style="left:373px;top:389px;width:14px;height:26px;line-height:26px;font-size:12px;color:#333;text-align:left;">近</div>
<div class="sel" style="left:389px;top:392px;width:43px;height:19px;"></div>
<div class="t" style="left:395px;top:392px;height:21px;line-height:21px;font-size:14px;color:#000;font-family:'Liberation Serif',serif;">10</div>
<svg class="a" style="left:418px;top:400px" width="10" height="7" viewBox="0 0 10 7"><path d="M1 1.2 L5 5.2 L9 1.2" fill="none" stroke="#111" stroke-width="1.6"/></svg>
<div class="t" style="left:438px;top:389px;width:14px;height:26px;line-height:26px;font-size:12px;color:#333;text-align:left;">场</div>
<svg class="a" style="left:454px;top:395px" width="14" height="14" viewBox="0 0 14 14"><rect x="1" y="1" width="12" height="12" rx="2" fill="#fff" stroke="#8a8a96" stroke-width="2"/></svg>
<div class="t" style="left:472px;top:389px;width:30px;height:26px;line-height:26px;font-size:12px;color:#333;text-align:left;">同客</div>
<svg class="a" style="left:500px;top:395px" width="14" height="14" viewBox="0 0 14 14"><rect x="0" y="0" width="14" height="14" rx="2.5" fill="#0b63dd"/><path d="M3 7.2 L5.8 10 L11 4" fill="none" stroke="#fff" stroke-width="2"/></svg>
<div class="t" style="left:514px;top:389px;width:60px;height:26px;line-height:26px;font-size:12px;color:#333;text-align:left;">国际友谊</div>
<svg class="a" style="left:562px;top:395px" width="14" height="14" viewBox="0 0 14 14"><rect x="0" y="0" width="14" height="14" rx="2.5" fill="#0b63dd"/><path d="M3 7.2 L5.8 10 L11 4" fill="none" stroke="#fff" stroke-width="2"/></svg>
<div class="t" style="left:575px;top:389px;width:60px;height:26px;line-height:26px;font-size:12px;color:#333;text-align:left;">欧洲杯</div>
<svg class="a" style="left:612px;top:395px" width="14" height="14" viewBox="0 0 14 14"><rect x="0" y="0" width="14" height="14" rx="2.5" fill="#0b63dd"/><path d="M3 7.2 L5.8 10 L11 4" fill="none" stroke="#fff" stroke-width="2"/></svg>
<div class="t" style="left:626px;top:389px;width:60px;height:26px;line-height:26px;font-size:12px;color:#333;text-align:left;">欧国联</div>
<svg class="a" style="left:662px;top:395px" width="14" height="14" viewBox="0 0 14 14"><rect x="0" y="0" width="14" height="14" rx="2.5" fill="#0b63dd"/><path d="M3 7.2 L5.8 10 L11 4" fill="none" stroke="#fff" stroke-width="2"/></svg>
<div class="t" style="left:676px;top:389px;width:60px;height:26px;line-height:26px;font-size:12px;color:#333;text-align:left;">欧洲预选</div>
<div class="a" style="left:1px;top:413px;width:1028px;height:44px;background:#dce4ed;"></div>
<div class="c" style="left:2px;top:415px;width:80px;height:42px;line-height:42px;font-size:12.5px;color:#333;">类型</div>
<div class="c" style="left:83px;top:415px;width:79px;height:42px;line-height:42px;font-size:12.5px;color:#333;">日期</div>
<div class="c" style="left:163px;top:415px;width:77px;height:42px;line-height:42px;font-size:12.5px;color:#333;">主场</div>
<div class="c" style="left:241px;top:415px;width:92px;height:42px;line-height:42px;font-size:12.5px;color:#333;">比分(半场)</div>
<div class="c" style="left:334px;top:415px;width:40px;height:42px;line-height:42px;font-size:12.5px;color:#333;">角球</div>
<div class="c" style="left:375px;top:415px;width:77px;height:42px;line-height:42px;font-size:12.5px;color:#333;">客场</div>
<div class="c" style="left:453px;top:440px;width:57px;height:18px;line-height:18px;font-size:12.5px;color:#333;">主</div>
<div class="c" style="left:511px;top:440px;width:94px;height:18px;line-height:18px;font-size:12.5px;color:#333;">让球</div>
<div class="c" style="left:606px;top:440px;width:57px;height:18px;line-height:18px;font-size:12.5px;color:#333;">客</div>
<div class="c" style="left:664px;top:440px;width:63px;height:18px;line-height:18px;font-size:12.5px;color:#333;">主</div>
<div class="c" style="left:728px;top:440px;width:81px;height:18px;line-height:18px;font-size:12.5px;color:#333;">和</div>
<div class="c" style="left:810px;top:440px;width:81px;height:18px;line-height:18px;font-size:12.5px;color:#333;">客</div>
<div class="c" style="left:892px;top:440px;width:38px;height:18px;line-height:18px;font-size:12.5px;color:#333;">胜负</div>
<div class="c" style="left:931px;top:440px;width:38px;height:18px;line-height:18px;font-size:12.5px;color:#333;">让球</div>
<div class="c" style="left:970px;top:440px;width:58px;height:18px;line-height:18px;font-size:12.5px;color:#333;">进球数</div>
<div class="sel" style="left:492px;top:415px;width:65px;height:20px;"></div>
<div class="t" style="left:498px;top:415px;height:22px;line-height:22px;font-size:13px;color:#000;">Crow*</div>
<svg class="a" style="left:543px;top:423px" width="10" height="7" viewBox="0 0 10 7"><path d="M1 1.2 L5 5.2 L9 1.2" fill="none" stroke="#111" stroke-width="1.6"/></svg>
<div class="sel" style="left:567px;top:414px;width:54px;height:21px;"></div>
<div class="t" style="left:572px;top:415px;height:23px;line-height:23px;font-size:14px;color:#000;">终指</div>
<svg class="a" style="left:607px;top:423px" width="10" height="7" viewBox="0 0 10 7"><path d="M1 1.2 L5 5.2 L9 1.2" fill="none" stroke="#111" stroke-width="1.6"/></svg>
<div class="sel" style="left:706px;top:414px;width:76px;height:21px;"></div>
<div class="t" style="left:712px;top:415px;height:23px;line-height:23px;font-size:14px;color:#000;">平均值</div>
<svg class="a" style="left:768px;top:423px" width="10" height="7" viewBox="0 0 10 7"><path d="M1 1.2 L5 5.2 L9 1.2" fill="none" stroke="#111" stroke-width="1.6"/></svg>
<div class="sel" style="left:792px;top:414px;width:54px;height:21px;"></div>
<div class="t" style="left:797px;top:415px;height:23px;line-height:23px;font-size:14px;color:#000;">终指</div>
<svg class="a" style="left:832px;top:423px" width="10" height="7" viewBox="0 0 10 7"><path d="M1 1.2 L5 5.2 L9 1.2" fill="none" stroke="#111" stroke-width="1.6"/></svg>
<div class="sel" style="left:931px;top:414px;width:55px;height:21px;"></div>
<div class="t" style="left:937px;top:415px;height:23px;line-height:23px;font-size:14px;color:#000;">全场</div>
<svg class="a" style="left:972px;top:423px" width="10" height="7" viewBox="0 0 10 7"><path d="M1 1.2 L5 5.2 L9 1.2" fill="none" stroke="#111" stroke-width="1.6"/></svg>
<div class="a" style="left:1px;top:457px;width:1028px;height:25px;background:#ffffff;"></div>
<div class="a" style="left:2px;top:457px;width:80px;height:25px;background:#4665b9;"></div>
<div class="a" style="left:453px;top:457px;width:57px;height:25px;background:#fdf9f6;box-shadow:inset 0 0 0 1px #fff;"></div>
<div class="a" style="left:511px;top:457px;width:94px;height:25px;background:#fdf9f6;box-shadow:inset 0 0 0 1px #fff;"></div>
<div class="a" style="left:606px;top:457px;width:57px;height:25px;background:#fdf9f6;box-shadow:inset 0 0 0 1px #fff;"></div>
<div class="a" style="left:664px;top:457px;width:63px;height:25px;background:#f0f7fb;box-shadow:inset 0 0 0 1px #fff;"></div>
<div class="a" style="left:728px;top:457px;width:81px;height:25px;background:#f0f7fb;box-shadow:inset 0 0 0 1px #fff;"></div>
<div class="a" style="left:810px;top:457px;width:81px;height:25px;background:#f0f7fb;box-shadow:inset 0 0 0 1px #fff;"></div>
<div class="c" style="left:2px;top:458px;width:80px;height:25px;line-height:25px;font-size:12px;color:#fff;">国际友谊</div>
<div class="c" style="left:83px;top:458px;width:79px;height:25px;line-height:25px;font-size:12.5px;color:#222222;">24-06-10</div>
<div class="c" style="left:163px;top:458px;width:77px;height:25px;line-height:25px;font-size:12.5px;color:#222222;">黑山</div>
<div class="c" style="left:241px;top:458px;width:92px;height:25px;line-height:25px;font-size:12.5px;color:#222222;"><span style="color:#f00">1-3</span>(0-2)</div>
<div class="c" style="left:334px;top:458px;width:40px;height:25px;line-height:25px;font-size:12.5px;color:#222222;">3-7</div>
<div class="c" style="left:375px;top:458px;width:77px;height:25px;line-height:25px;font-size:12.5px;color:#008000;">格鲁吉亚</div>
<div class="c" style="left:453px;top:458px;width:57px;height:25px;line-height:25px;font-size:12.5px;color:#222222;">1.11</div>
<div class="c" style="left:511px;top:458px;width:94px;height:25px;line-height:25px;font-size:12.5px;color:#222222;">平手</div>
<div class="c" style="left:606px;top:458px;width:57px;height:25px;line-height:25px;font-size:12.5px;color:#222222;">0.78</div>
<div class="c" style="left:664px;top:458px;width:63px;height:25px;line-height:25px;font-size:12.5px;color:#222222;">2.88</div>
<div class="c" style="left:728px;top:458px;width:81px;height:25px;line-height:25px;font-size:12.5px;color:#222222;">3.17</div>
<div class="c" style="left:810px;top:458px;width:81px;height:25px;line-height:25px;font-size:12.5px;color:#222222;">2.45</div>
<div class="c" style="left:892px;top:458px;width:38px;height:25px;line-height:25px;font-size:12.5px;color:#ff0000;">胜</div>
<div class="c" style="left:931px;top:458px;width:38px;height:25px;line-height:25px;font-size:12.5px;color:#ff0000;">赢</div>
<div class="c" style="left:970px;top:458px;width:58px;height:25px;line-height:25px;font-size:12.5px;color:#ff0000;">大</div>
<div class="a" style="left:1px;top:483px;width:1028px;height:25px;background:#efefef;"></div>
<div class="a" style="left:2px;top:483px;width:80px;height:25px;background:#660000;"></div>
<div class="a" style="left:453px;top:483px;width:57px;height:25px;background:#fdf9f6;box-shadow:inset 0 0 0 1px #fff;"></div>
<div class="a" style="left:511px;top:483px;width:94px;height:25px;background:#fdf9f6;box-shadow:inset 0 0 0 1px #fff;"></div>
<div class="a" style="left:606px;top:483px;width:57px;height:25px;background:#fdf9f6;box-shadow:inset 0 0 0 1px #fff;"></div>
<div class="a" style="left:664px;top:483px;width:63px;height:25px;background:#f0f7fb;box-shadow:inset 0 0 0 1px #fff;"></div>
<div class="a" style="left:728px;top:483px;width:81px;height:25px;background:#f0f7fb;box-shadow:inset 0 0 0 1px #fff;"></div>
<div class="a" style="left:810px;top:483px;width:81px;height:25px;background:#f0f7fb;box-shadow:inset 0 0 0 1px #fff;"></div>
<div class="c" style="left:2px;top:484px;width:80px;height:25px;line-height:25px;font-size:12px;color:#fff;">欧洲杯</div>
<div class="c" style="left:83px;top:484px;width:79px;height:25px;line-height:25px;font-size:12.5px;color:#222222;">24-03-27</div>
<div class="c" style="left:163px;top:484px;width:77px;height:25px;line-height:25px;font-size:12.5px;color:#008000;">格鲁吉亚</div>
<div class="c" style="left:241px;top:484px;width:92px;height:25px;line-height:25px;font-size:12.5px;color:#222222;"><span style="color:#f00">0-0</span>(0-0)</div>
<div class="c" style="left:334px;top:484px;width:40px;height:25px;line-height:25px;font-size:12.5px;color:#222222;">2-6</div>
<div class="c" style="left:375px;top:484px;width:77px;height:25px;line-height:25px;font-size:12.5px;color:#222222;">希腊</div>
<div class="c" style="left:453px;top:484px;width:57px;height:25px;line-height:25px;font-size:12.5px;color:#222222;">0.79</div>
<div class="c" style="left:511px;top:484px;width:94px;height:25px;line-height:25px;font-size:12.5px;color:#222222;">受平/半</div>
<div class="c" style="left:606px;top:484px;width:57px;height:25px;line-height:25px;font-size:12.5px;color:#222222;">1.12</div>
<div class="c" style="left:664px;top:484px;width:63px;height:25px;line-height:25px;font-size:12.5px;color:#222222;">3.30</div>
<div class="c" style="left:728px;top:484px;width:81px;height:25px;line-height:25px;font-size:12.5px;color:#222222;">2.94</div>
<div class="c" style="left:810px;top:484px;width:81px;height:25px;line-height:25px;font-size:12.5px;color:#222222;">2.40</div>
<div class="c" style="left:892px;top:484px;width:38px;height:25px;line-height:25px;font-size:12.5px;color:#008000;">平</div>
<div class="c" style="left:931px;top:484px;width:38px;height:25px;line-height:25px;font-size:12.5px;color:#ff0000;">赢</div>
<div class="c" style="left:970px;top:484px;width:58px;height:25px;line-height:25px;font-size:12.5px;color:#0000ff;">小</div>
<div class="a" style="left:1px;top:509px;width:1028px;height:25px;background:#ffffff;"></div>
<div class="a" style="left:2px;top:509px;width:80px;height:25px;background:#660000;"></div>
<div class="a" style="left:453px;top:509px;width:57px;height:25px;background:#fdf9f6;box-shadow:inset 0 0 0 1px #fff;"></div>
<div class="a" style="left:511px;top:509px;width:94px;height:25px;background:#fdf9f6;box-shadow:inset 0 0 0 1px #fff;"></div>
<div class="a" style="left:606px;top:509px;width:57px;height:25px;background:#fdf9f6;box-shadow:inset 0 0 0 1px #fff;"></div>
<div class="a" style="left:664px;top:509px;width:63px;height:25px;background:#f0f7fb;box-shadow:inset 0 0 0 1px #fff;"></div>
<div class="a" style="left:728px;top:509px;width:81px;height:25px;background:#f0f7fb;box-shadow:inset 0 0 0 1px #fff;"></div>
<div class="a" style="left:810px;top:509px;width:81px;height:25px;background:#f0f7fb;box-shadow:inset 0 0 0 1px #fff;"></div>
<div class="c" style="left:2px;top:510px;width:80px;height:25px;line-height:25px;font-size:12px;color:#fff;">欧洲杯</div>
<div class="c" style="left:83px;top:510px;width:79px;height:25px;line-height:25px;font-size:12.5px;color:#222222;">24-03-22</div>
<div class="c" style="left:163px;top:510px;width:77px;height:25px;line-height:25px;font-size:12.5px;color:#008000;">格鲁吉亚</div>
<div class="c" style="left:241px;top:510px;width:92px;height:25px;line-height:25px;font-size:12.5px;color:#222222;"><span style="color:#f00">2-0</span>(1-0)</div>
<div class="c" style="left:334px;top:510px;width:40px;height:25px;line-height:25px;font-size:12.5px;color:#222222;">2-0</div>
<div class="c" style="left:375px;top:510px;width:77px;height:25px;line-height:25px;font-size:12.5px;color:#222222;">卢森堡<span class="badge">1</span></div>
<div class="c" style="left:453px;top:510px;width:57px;height:25px;line-height:25px;font-size:12.5px;color:#222222;">1.06</div>
<div class="c" style="left:511px;top:510px;width:94px;height:25px;line-height:25px;font-size:12.5px;color:#222222;">半/一</div>
<div class="c" style="left:606px;top:510px;width:57px;height:25px;line-height:25px;font-size:12.5px;color:#222222;">0.84</div>
<div class="c" style="left:664px;top:510px;width:63px;height:25px;line-height:25px;font-size:12.5px;color:#222222;">1.80</div>
<div class="c" style="left:728px;top:510px;width:81px;height:25px;line-height:25px;font-size:12.5px;color:#222222;">3.38</div>
<div class="c" style="left:810px;top:510px;width:81px;height:25px;line-height:25px;font-size:12.5px;color:#222222;">4.82</div>
<div class="c" style="left:892px;top:510px;width:38px;height:25px;line-height:25px;font-size:12.5px;color:#ff0000;">胜</div>
<div class="c" style="left:931px;top:510px;width:38px;height:25px;line-height:25px;font-size:12.5px;color:#ff0000;">赢</div>
<div class="c" style="left:970px;top:510px;width:58px;height:25px;line-height:25px;font-size:12.5px;color:#0000ff;">小</div>
<div class="a" style="left:1px;top:535px;width:1028px;height:25px;background:#efefef;"></div>
<div class="a" style="left:2px;top:535px;width:80px;height:25px;background:#660000;"></div>
<div class="a" style="left:453px;top:535px;width:57px;height:25px;background:#fdf9f6;box-shadow:inset 0 0 0 1px #fff;"></div>
<div class="a" style="left:511px;top:535px;width:94px;height:25px;background:#fdf9f6;box-shadow:inset 0 0 0 1px #fff;"></div>
<div class="a" style="left:606px;top:535px;width:57px;height:25px;background:#fdf9f6;box-shadow:inset 0 0 0 1px #fff;"></div>
<div class="a" style="left:664px;top:535px;width:63px;height:25px;background:#f0f7fb;box-shadow:inset 0 0 0 1px #fff;"></div>
<div class="a" style="left:728px;top:535px;width:81px;height:25px;background:#f0f7fb;box-shadow:inset 0 0 0 1px #fff;"></div>
<div class="a" style="left:810px;top:535px;width:81px;height:25px;background:#f0f7fb;box-shadow:inset 0 0 0 1px #fff;"></div>
<div class="c" style="left:2px;top:536px;width:80px;height:25px;line-height:25px;font-size:12px;color:#fff;">欧洲杯</div>
<div class="c" style="left:83px;top:536px;width:79px;height:25px;line-height:25px;font-size:12.5px;color:#222222;">23-11-20</div>
<div class="c" style="left:163px;top:536px;width:77px;height:25px;line-height:25px;font-size:12.5px;color:#222222;">西班牙</div>
<div class="c" style="left:241px;top:536px;width:92px;height:25px;line-height:25px;font-size:12.5px;color:#222222;"><span style="color:#f00">3-1</span>(1-1)</div>
<div class="c" style="left:334px;top:536px;width:40px;height:25px;line-height:25px;font-size:12.5px;color:#222222;">9-3</div>
<div class="c" style="left:375px;top:536px;width:77px;height:25px;line-height:25px;font-size:12.5px;color:#008000;">格鲁吉亚</div>
<div class="c" style="left:453px;top:536px;width:57px;height:25px;line-height:25px;font-size:12.5px;color:#222222;">0.85</div>
<div class="c" style="left:511px;top:536px;width:94px;height:25px;line-height:25px;font-size:12.5px;color:#222222;">两球半</div>
<div class="c" style="left:606px;top:536px;width:57px;height:25px;line-height:25px;font-size:12.5px;color:#222222;">1.05</div>
<div class="c" style="left:664px;top:536px;width:63px;height:25px;line-height:25px;font-size:12.5px;color:#222222;">1.08</div>
<div class="c" style="left:728px;top:536px;width:81px;height:25px;line-height:25px;font-size:12.5px;color:#222222;">10.79</div>
<div class="c" style="left:810px;top:536px;width:81px;height:25px;line-height:25px;font-size:12.5px;color:#222222;">28.17</div>
<div class="c" style="left:892px;top:536px;width:38px;height:25px;line-height:25px;font-size:12.5px;color:#0000ff;">负</div>
<div class="c" style="left:931px;top:536px;width:38px;height:25px;line-height:25px;font-size:12.5px;color:#ff0000;">赢</div>
<div class="c" style="left:970px;top:536px;width:58px;height:25px;line-height:25px;font-size:12.5px;color:#ff0000;">大</div>
<div class="a" style="left:1px;top:561px;width:1028px;height:25px;background:#ffffff;"></div>
<div class="a" style="left:2px;top:561px;width:80px;height:25px;background:#660000;"></div>
<div class="a" style="left:453px;top:561px;width:57px;height:25px;background:#fdf9f6;box-shadow:inset 0 0 0 1px #fff;"></div>
<div class="a" style="left:511px;top:561px;width:94px;height:25px;background:#fdf9f6;box-shadow:inset 0 0 0 1px #fff;"></div>
<div class="a" style="left:606px;top:561px;width:57px;height:25px;background:#fdf9f6;box-shadow:inset 0 0 0 1px #fff;"></div>
<div class="a" style="left:664px;top:561px;width:63px;height:25px;background:#f0f7fb;box-shadow:inset 0 0 0 1px #fff;"></div>
<div class="a" style="left:728px;top:561px;width:81px;height:25px;background:#f0f7fb;box-shadow:inset 0 0 0 1px #fff;"></div>
<div class="a" style="left:810px;top:561px;width:81px;height:25px;background:#f0f7fb;box-shadow:inset 0 0 0 1px #fff;"></div>
<div class="c" style="left:2px;top:562px;width:80px;height:25px;line-height:25px;font-size:12px;color:#fff;">欧洲杯</div>
<div class="c" style="left:83px;top:562px;width:79px;height:25px;line-height:25px;font-size:12.5px;color:#222222;">23-11-17</div>
<div class="c" style="left:163px;top:562px;width:77px;height:25px;line-height:25px;font-size:12.5px;color:#008000;">格鲁吉亚</div>
<div class="c" style="left:241px;top:562px;width:92px;height:25px;line-height:25px;font-size:12.5px;color:#222222;"><span style="color:#f00">2-2</span>(1-0)</div>
<div class="c" style="left:334px;top:562px;width:40px;height:25px;line-height:25px;font-size:12.5px;color:#222222;">4-4</div>
<div class="c" style="left:375px;top:562px;width:77px;height:25px;line-height:25px;font-size:12.5px;color:#222222;">苏格兰</div>
<div class="c" style="left:453px;top:562px;width:57px;height:25px;line-height:25px;font-size:12.5px;color:#222222;">0.88</div>
<div class="c" style="left:511px;top:562px;width:94px;height:25px;line-height:25px;font-size:12.5px;color:#222222;">受平/半</div>
<div class="c" style="left:606px;top:562px;width:57px;height:25px;line-height:25px;font-size:12.5px;color:#222222;">1.01</div>
<div class="c" style="left:664px;top:562px;width:63px;height:25px;line-height:25px;font-size:12.5px;color:#222222;">3.25</div>
<div class="c" style="left:728px;top:562px;width:81px;height:25px;line-height:25px;font-size:12.5px;color:#222222;">3.24</div>
<div class="c" style="left:810px;top:562px;width:81px;height:25px;line-height:25px;font-size:12.5px;color:#222222;">2.26</div>
<div class="c" style="left:892px;top:562px;width:38px;height:25px;line-height:25px;font-size:12.5px;color:#008000;">平</div>
<div class="c" style="left:931px;top:562px;width:38px;height:25px;line-height:25px;font-size:12.5px;color:#ff0000;">赢</div>
<div class="c" style="left:970px;top:562px;width:58px;height:25px;line-height:25px;font-size:12.5px;color:#ff0000;">大</div>
<div class="a" style="left:1px;top:587px;width:1028px;height:25px;background:#efefef;"></div>
<div class="a" style="left:2px;top:587px;width:80px;height:25px;background:#660000;"></div>
<div class="a" style="left:453px;top:587px;width:57px;height:25px;background:#fdf9f6;box-shadow:inset 0 0 0 1px #fff;"></div>
<div class="a" style="left:511px;top:587px;width:94px;height:25px;background:#fdf9f6;box-shadow:inset 0 0 0 1px #fff;"></div>
<div class="a" style="left:606px;top:587px;width:57px;height:25px;background:#fdf9f6;box-shadow:inset 0 0 0 1px #fff;"></div>
<div class="a" style="left:664px;top:587px;width:63px;height:25px;background:#f0f7fb;box-shadow:inset 0 0 0 1px #fff;"></div>
<div class="a" style="left:728px;top:587px;width:81px;height:25px;background:#f0f7fb;box-shadow:inset 0 0 0 1px #fff;"></div>
<div class="a" style="left:810px;top:587px;width:81px;height:25px;background:#f0f7fb;box-shadow:inset 0 0 0 1px #fff;"></div>
<div class="c" style="left:2px;top:588px;width:80px;height:25px;line-height:25px;font-size:12px;color:#fff;">欧洲杯</div>
<div class="c" style="left:83px;top:588px;width:79px;height:25px;line-height:25px;font-size:12.5px;color:#222222;">23-10-15</div>
<div class="c" style="left:163px;top:588px;width:77px;height:25px;line-height:25px;font-size:12.5px;color:#008000;">格鲁吉亚</div>
<div class="c" style="left:241px;top:588px;width:92px;height:25px;line-height:25px;font-size:12.5px;color:#222222;"><span style="color:#f00">4-0</span>(0-0)</div>
<div class="c" style="left:334px;top:588px;width:40px;height:25px;line-height:25px;font-size:12.5px;color:#222222;">2-4</div>
<div class="c" style="left:375px;top:588px;width:77px;height:25px;line-height:25px;font-size:12.5px;color:#222222;">塞浦路斯</div>
<div class="c" style="left:453px;top:588px;width:57px;height:25px;line-height:25px;font-size:12.5px;color:#222222;">1.07</div>
<div class="c" style="left:511px;top:588px;width:94px;height:25px;line-height:25px;font-size:12.5px;color:#222222;">球半</div>
<div class="c" style="left:606px;top:588px;width:57px;height:25px;line-height:25px;font-size:12.5px;color:#222222;">0.83</div>
<div class="c" style="left:664px;top:588px;width:63px;height:25px;line-height:25px;font-size:12.5px;color:#222222;">1.31</div>
<div class="c" style="left:728px;top:588px;width:81px;height:25px;line-height:25px;font-size:12.5px;color:#222222;">5.19</div>
<div class="c" style="left:810px;top:588px;width:81px;height:25px;line-height:25px;font-size:12.5px;color:#222222;">9.85</div>
<div class="c" style="left:892px;top:588px;width:38px;height:25px;line-height:25px;font-size:12.5px;color:#ff0000;">胜</div>
<div class="c" style="left:931px;top:588px;width:38px;height:25px;line-height:25px;font-size:12.5px;color:#ff0000;">赢</div>
<div class="c" style="left:970px;top:588px;width:58px;height:25px;line-height:25px;font-size:12.5px;color:#ff0000;">大</div>
<div class="a" style="left:1px;top:613px;width:1028px;height:25px;background:#ffffff;"></div>
<div class="a" style="left:2px;top:613px;width:80px;height:25px;background:#4665b9;"></div>
<div class="a" style="left:453px;top:613px;width:57px;height:25px;background:#fdf9f6;box-shadow:inset 0 0 0 1px #fff;"></div>
<div class="a" style="left:511px;top:613px;width:94px;height:25px;background:#fdf9f6;box-shadow:inset 0 0 0 1px #fff;"></div>
<div class="a" style="left:606px;top:613px;width:57px;height:25px;background:#fdf9f6;box-shadow:inset 0 0 0 1px #fff;"></div>
<div class="a" style="left:664px;top:613px;width:63px;height:25px;background:#f0f7fb;box-shadow:inset 0 0 0 1px #fff;"></div>
<div class="a" style="left:728px;top:613px;width:81px;height:25px;background:#f0f7fb;box-shadow:inset 0 0 0 1px #fff;"></div>
<div class="a" style="left:810px;top:613px;width:81px;height:25px;background:#f0f7fb;box-shadow:inset 0 0 0 1px #fff;"></div>
<div class="c" style="left:2px;top:614px;width:80px;height:25px;line-height:25px;font-size:12px;color:#fff;">国际友谊</div>
<div class="c" style="left:83px;top:614px;width:79px;height:25px;line-height:25px;font-size:12.5px;color:#222222;">23-10-12</div>
<div class="c" style="left:163px;top:614px;width:77px;height:25px;line-height:25px;font-size:12.5px;color:#008000;">格鲁吉亚</div>
<div class="c" style="left:241px;top:614px;width:92px;height:25px;line-height:25px;font-size:12.5px;color:#222222;"><span style="color:#f00">8-0</span>(6-0)</div>
<div class="c" style="left:334px;top:614px;width:40px;height:25px;line-height:25px;font-size:12.5px;color:#222222;">12-1</div>
<div class="c" style="left:375px;top:614px;width:77px;height:25px;line-height:25px;font-size:12.5px;color:#222222;">泰国</div>
<div class="c" style="left:453px;top:614px;width:57px;height:25px;line-height:25px;font-size:12.5px;color:#222222;">0.85</div>
<div class="c" style="left:511px;top:614px;width:94px;height:25px;line-height:25px;font-size:12.5px;color:#222222;">球半</div>
<div class="c" style="left:606px;top:614px;width:57px;height:25px;line-height:25px;font-size:12.5px;color:#222222;">0.97</div>
<div class="c" style="left:664px;top:614px;width:63px;height:25px;line-height:25px;font-size:12.5px;color:#222222;">1.20</div>
<div class="c" style="left:728px;top:614px;width:81px;height:25px;line-height:25px;font-size:12.5px;color:#222222;">6.12</div>
<div class="c" style="left:810px;top:614px;width:81px;height:25px;line-height:25px;font-size:12.5px;color:#222222;">12.09</div>
<div class="c" style="left:892px;top:614px;width:38px;height:25px;line-height:25px;font-size:12.5px;color:#ff0000;">胜</div>
<div class="c" style="left:931px;top:614px;width:38px;height:25px;line-height:25px;font-size:12.5px;color:#ff0000;">赢</div>
<div class="c" style="left:970px;top:614px;width:58px;height:25px;line-height:25px;font-size:12.5px;color:#ff0000;">大</div>
<div class="a" style="left:1px;top:639px;width:1028px;height:25px;background:#efefef;"></div>
<div class="a" style="left:2px;top:639px;width:80px;height:25px;background:#660000;"></div>
<div class="a" style="left:453px;top:639px;width:57px;height:25px;background:#fdf9f6;box-shadow:inset 0 0 0 1px #fff;"></div>
<div class="a" style="left:511px;top:639px;width:94px;height:25px;background:#fdf9f6;box-shadow:inset 0 0 0 1px #fff;"></div>
<div class="a" style="left:606px;top:639px;width:57px;height:25px;background:#fdf9f6;box-shadow:inset 0 0 0 1px #fff;"></div>
<div class="a" style="left:664px;top:639px;width:63px;height:25px;background:#f0f7fb;box-shadow:inset 0 0 0 1px #fff;"></div>
<div class="a" style="left:728px;top:639px;width:81px;height:25px;background:#f0f7fb;box-shadow:inset 0 0 0 1px #fff;"></div>
<div class="a" style="left:810px;top:639px;width:81px;height:25px;background:#f0f7fb;box-shadow:inset 0 0 0 1px #fff;"></div>
<div class="c" style="left:2px;top:640px;width:80px;height:25px;line-height:25px;font-size:12px;color:#fff;">欧洲杯</div>
<div class="c" style="left:83px;top:640px;width:79px;height:25px;line-height:25px;font-size:12.5px;color:#222222;">23-09-13</div>
<div class="c" style="left:163px;top:640px;width:77px;height:25px;line-height:25px;font-size:12.5px;color:#222222;">挪威</div>
<div class="c" style="left:241px;top:640px;width:92px;height:25px;line-height:25px;font-size:12.5px;color:#222222;"><span style="color:#f00">2-1</span>(2-0)</div>
<div class="c" style="left:334px;top:640px;width:40px;height:25px;line-height:25px;font-size:12.5px;color:#222222;">6-0</div>
<div class="c" style="left:375px;top:640px;width:77px;height:25px;line-height:25px;font-size:12.5px;color:#008000;">格鲁吉亚</div>
<div class="c" style="left:453px;top:640px;width:57px;height:25px;line-height:25px;font-size:12.5px;color:#222222;">0.89</div>
<div class="c" style="left:511px;top:640px;width:94px;height:25px;line-height:25px;font-size:12.5px;color:#222222;">球半</div>
<div class="c" style="left:606px;top:640px;width:57px;height:25px;line-height:25px;font-size:12.5px;color:#222222;">1.01</div>
<div class="c" style="left:664px;top:640px;width:63px;height:25px;line-height:25px;font-size:12.5px;color:#222222;">1.26</div>
<div class="c" style="left:728px;top:640px;width:81px;height:25px;line-height:25px;font-size:12.5px;color:#222222;">5.61</div>
<div class="c" style="left:810px;top:640px;width:81px;height:25px;line-height:25px;font-size:12.5px;color:#222222;">11.07</div>
<div class="c" style="left:892px;top:640px;width:38px;height:25px;line-height:25px;font-size:12.5px;color:#0000ff;">负</div>
<div class="c" style="left:931px;top:640px;width:38px;height:25px;line-height:25px;font-size:12.5px;color:#ff0000;">赢</div>
<div class="c" style="left:970px;top:640px;width:58px;height:25px;line-height:25px;font-size:12.5px;color:#008000;">走</div>
<div class="a" style="left:1px;top:665px;width:1028px;height:25px;background:#ffffff;"></div>
<div class="a" style="left:2px;top:665px;width:80px;height:25px;background:#660000;"></div>
<div class="a" style="left:453px;top:665px;width:57px;height:25px;background:#fdf9f6;box-shadow:inset 0 0 0 1px #fff;"></div>
<div class="a" style="left:511px;top:665px;width:94px;height:25px;background:#fdf9f6;box-shadow:inset 0 0 0 1px #fff;"></div>
<div class="a" style="left:606px;top:665px;width:57px;height:25px;background:#fdf9f6;box-shadow:inset 0 0 0 1px #fff;"></div>
<div class="a" style="left:664px;top:665px;width:63px;height:25px;background:#f0f7fb;box-shadow:inset 0 0 0 1px #fff;"></div>
<div class="a" style="left:728px;top:665px;width:81px;height:25px;background:#f0f7fb;box-shadow:inset 0 0 0 1px #fff;"></div>
<div class="a" style="left:810px;top:665px;width:81px;height:25px;background:#f0f7fb;box-shadow:inset 0 0 0 1px #fff;"></div>
<div class="c" style="left:2px;top:666px;width:80px;height:25px;line-height:25px;font-size:12px;color:#fff;">欧洲杯</div>
<div class="c" style="left:83px;top:666px;width:79px;height:25px;line-height:25px;font-size:12.5px;color:#222222;">23-09-08</div>
<div class="c" style="left:163px;top:666px;width:77px;height:25px;line-height:25px;font-size:12.5px;color:#008000;">格鲁吉亚</div>
<div class="c" style="left:241px;top:666px;width:92px;height:25px;line-height:25px;font-size:12.5px;color:#222222;"><span style="color:#f00">1-7</span>(0-4)</div>
<div class="c" style="left:334px;top:666px;width:40px;height:25px;line-height:25px;font-size:12.5px;color:#222222;">2-6</div>
<div class="c" style="left:375px;top:666px;width:77px;height:25px;line-height:25px;font-size:12.5px;color:#222222;">西班牙</div>
<div class="c" style="left:453px;top:666px;width:57px;height:25px;line-height:25px;font-size:12.5px;color:#222222;">0.80</div>
<div class="c" style="left:511px;top:666px;width:94px;height:25px;line-height:25px;font-size:12.5px;color:#222222;">受球半</div>
<div class="c" style="left:606px;top:666px;width:57px;height:25px;line-height:25px;font-size:12.5px;color:#222222;">1.11</div>
<div class="c" style="left:664px;top:666px;width:63px;height:25px;line-height:25px;font-size:12.5px;color:#222222;">9.35</div>
<div class="c" style="left:728px;top:666px;width:81px;height:25px;line-height:25px;font-size:12.5px;color:#222222;">5.14</div>
<div class="c" style="left:810px;top:666px;width:81px;height:25px;line-height:25px;font-size:12.5px;color:#222222;">1.32</div>
<div class="c" style="left:892px;top:666px;width:38px;height:25px;line-height:25px;font-size:12.5px;color:#0000ff;">负</div>
<div class="c" style="left:931px;top:666px;width:38px;height:25px;line-height:25px;font-size:12.5px;color:#0000ff;">输</div>
<div class="c" style="left:970px;top:666px;width:58px;height:25px;line-height:25px;font-size:12.5px;color:#ff0000;">大</div>
<div class="a" style="left:1px;top:691px;width:1028px;height:25px;background:#efefef;"></div>
<div class="a" style="left:2px;top:691px;width:80px;height:25px;background:#660000;"></div>
<div class="a" style="left:453px;top:691px;width:57px;height:25px;background:#fdf9f6;box-shadow:inset 0 0 0 1px #fff;"></div>
<div class="a" style="left:511px;top:691px;width:94px;height:25px;background:#fdf9f6;box-shadow:inset 0 0 0 1px #fff;"></div>
<div class="a" style="left:606px;top:691px;width:57px;height:25px;background:#fdf9f6;box-shadow:inset 0 0 0 1px #fff;"></div>
<div class="a" style="left:664px;top:691px;width:63px;height:25px;background:#f0f7fb;box-shadow:inset 0 0 0 1px #fff;"></div>
<div class="a" style="left:728px;top:691px;width:81px;height:25px;background:#f0f7fb;box-shadow:inset 0 0 0 1px #fff;"></div>
<div class="a" style="left:810px;top:691px;width:81px;height:25px;background:#f0f7fb;box-shadow:inset 0 0 0 1px #fff;"></div>
<div class="c" style="left:2px;top:692px;width:80px;height:25px;line-height:25px;font-size:12px;color:#fff;">欧洲杯</div>
<div class="c" style="left:83px;top:692px;width:79px;height:25px;line-height:25px;font-size:12.5px;color:#222222;">23-06-21</div>
<div class="c" style="left:163px;top:692px;width:77px;height:25px;line-height:25px;font-size:12.5px;color:#222222;">苏格兰</div>
<div class="c" style="left:241px;top:692px;width:92px;height:25px;line-height:25px;font-size:12.5px;color:#222222;"><span style="color:#f00">2-0</span>(1-0)</div>
<div class="c" style="left:334px;top:692px;width:40px;height:25px;line-height:25px;font-size:12.5px;color:#222222;">8-0</div>
<div class="c" style="left:375px;top:692px;width:77px;height:25px;line-height:25px;font-size:12.5px;color:#008000;">格鲁吉亚</div>
<div class="c" style="left:453px;top:692px;width:57px;height:25px;line-height:25px;font-size:12.5px;color:#222222;">1.13</div>
<div class="c" style="left:511px;top:692px;width:94px;height:25px;line-height:25px;font-size:12.5px;color:#222222;">一球</div>
<div class="c" style="left:606px;top:692px;width:57px;height:25px;line-height:25px;font-size:12.5px;color:#222222;">0.78</div>
<div class="c" style="left:664px;top:692px;width:63px;height:25px;line-height:25px;font-size:12.5px;color:#222222;">1.56</div>
<div class="c" style="left:728px;top:692px;width:81px;height:25px;line-height:25px;font-size:12.5px;color:#222222;">3.90</div>
<div class="c" style="left:810px;top:692px;width:81px;height:25px;line-height:25px;font-size:12.5px;color:#222222;">6.17</div>
<div class="c" style="left:892px;top:692px;width:38px;height:25px;line-height:25px;font-size:12.5px;color:#0000ff;">负</div>
<div class="c" style="left:931px;top:692px;width:38px;height:25px;line-height:25px;font-size:12.5px;color:#0000ff;">输</div>
<div class="c" style="left:970px;top:692px;width:58px;height:25px;line-height:25px;font-size:12.5px;color:#0000ff;">小</div>
<div class="a" style="left:1px;top:717px;width:1028px;height:25px;background:#fff;"></div>
<div class="c" style="left:1px;top:718px;width:1028px;height:25px;line-height:25px;font-size:12.5px;color:#333;">近<span style="color:#f00">10</span>场,胜4平2负4, 胜率:<span style="color:#f00">40%</span> 让胜率:<span style="color:#f00">80%</span> 大率:<span style="color:#f00">60%</span> 单率:<span style="color:#f00">10%</span></div>
<div class="a" style="left:1px;top:413px;width:1028px;height:1px;background:#bbbbbb;"></div>
<div class="a" style="left:452px;top:437px;width:576px;height:1px;background:#bbbbbb;"></div>
<div class="a" style="left:1px;top:456px;width:1028px;height:1px;background:#bbbbbb;"></div>
<div class="a" style="left:1px;top:482px;width:1028px;height:1px;background:#bbbbbb;"></div>
<div class="a" style="left:1px;top:508px;width:1028px;height:1px;background:#bbbbbb;"></div>
<div class="a" style="left:1px;top:534px;width:1028px;height:1px;background:#bbbbbb;"></div>
<div class="a" style="left:1px;top:560px;width:1028px;height:1px;background:#bbbbbb;"></div>
<div class="a" style="left:1px;top:586px;width:1028px;height:1px;background:#bbbbbb;"></div>
<div class="a" style="left:1px;top:612px;width:1028px;height:1px;background:#bbbbbb;"></div>
<div class="a" style="left:1px;top:638px;width:1028px;height:1px;background:#bbbbbb;"></div>
<div class="a" style="left:1px;top:664px;width:1028px;height:1px;background:#bbbbbb;"></div>
<div class="a" style="left:1px;top:690px;width:1028px;height:1px;background:#bbbbbb;"></div>
<div class="a" style="left:1px;top:716px;width:1028px;height:1px;background:#bbbbbb;"></div>
<div class="a" style="left:1px;top:742px;width:1028px;height:1px;background:#bbbbbb;"></div>
<div class="a" style="left:1px;top:413px;width:1px;height:330px;background:#bbbbbb;"></div>
<div class="a" style="left:82px;top:413px;width:1px;height:304px;background:#bbbbbb;"></div>
<div class="a" style="left:162px;top:413px;width:1px;height:304px;background:#bbbbbb;"></div>
<div class="a" style="left:240px;top:413px;width:1px;height:304px;background:#bbbbbb;"></div>
<div class="a" style="left:333px;top:413px;width:1px;height:304px;background:#bbbbbb;"></div>
<div class="a" style="left:374px;top:413px;width:1px;height:304px;background:#bbbbbb;"></div>
<div class="a" style="left:452px;top:413px;width:1px;height:304px;background:#bbbbbb;"></div>
<div class="a" style="left:510px;top:437px;width:1px;height:280px;background:#bbbbbb;"></div>
<div class="a" style="left:605px;top:437px;width:1px;height:280px;background:#bbbbbb;"></div>
<div class="a" style="left:663px;top:413px;width:1px;height:304px;background:#bbbbbb;"></div>
<div class="a" style="left:727px;top:437px;width:1px;height:280px;background:#bbbbbb;"></div>
<div class="a" style="left:809px;top:437px;width:1px;height:280px;background:#bbbbbb;"></div>
<div class="a" style="left:891px;top:413px;width:1px;height:304px;background:#bbbbbb;"></div>
<div class="a" style="left:930px;top:437px;width:1px;height:280px;background:#bbbbbb;"></div>
<div class="a" style="left:969px;top:437px;width:1px;height:280px;background:#bbbbbb;"></div>
<div class="a" style="left:1028px;top:413px;width:1px;height:330px;background:#bbbbbb;"></div>
</body></html>
